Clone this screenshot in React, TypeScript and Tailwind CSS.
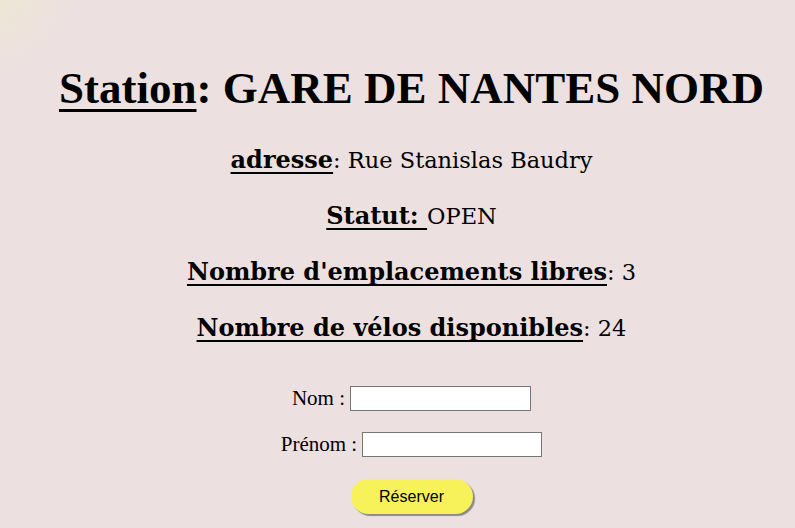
export default function App() {
  const bold =
    'font-bold underline underline-offset-[4px] decoration-2 [text-decoration-skip-ink:none] text-[24px] [font-family:"DejaVu_Serif",Georgia,serif]';
  return (
    <div
      className="min-h-[528px] w-full bg-[#ede0e0] text-black"
      style={{ fontFamily: '"Liberation Serif", Georgia, serif' }}
    >
      <div className="min-h-[528px] bg-[radial-gradient(circle_at_0_0,#ede6d4_0px,#ede0e0_70px)] pl-[28px] pt-[60px] text-center">
        <h1 className="text-[45px] font-bold leading-[56px]">
          <span className="underline underline-offset-[6px] decoration-[3px]">Station</span>: GARE DE NANTES NORD
        </h1>
        <div
          className="mt-[29px] flex flex-col gap-[26px] text-[22.5px] leading-[30px]"
          style={{ fontFamily: '"DejaVu Serif", Georgia, serif' }}
        >
          <p>
            <span className={bold}>adresse</span>: Rue Stanislas Baudry
          </p>
          <p>
            <span className={bold}>Statut: </span>OPEN
          </p>
          <p>
            <span className={bold}>Nombre d'emplacements libres</span>: 3
          </p>
          <p>
            <span className={bold}>Nombre de vélos disponibles</span>: 24
          </p>
        </div>
        <form className="mt-[40px] flex flex-col items-center text-[21px]">
          <div className="flex items-center gap-[5px]">
            <label>Nom :</label>
            <input className="h-[25px] w-[181px] border border-[#767676] bg-white" />
          </div>
          <div className="mt-[14px] flex items-center gap-[5px]">
            <label>Prénom :</label>
            <input className="h-[25px] w-[180px] border border-[#767676] bg-white" />
          </div>
          <button
            type="button"
            className="mt-[19px] h-[35px] w-[122px] rounded-full bg-[#f7f15a] text-[16px] text-black shadow-[2px_2px_1px_#8a8a8a]"
            style={{ fontFamily: '"Liberation Sans", Tahoma, sans-serif' }}
          >
            Réserver
          </button>
        </form>
      </div>
    </div>
  );
}
